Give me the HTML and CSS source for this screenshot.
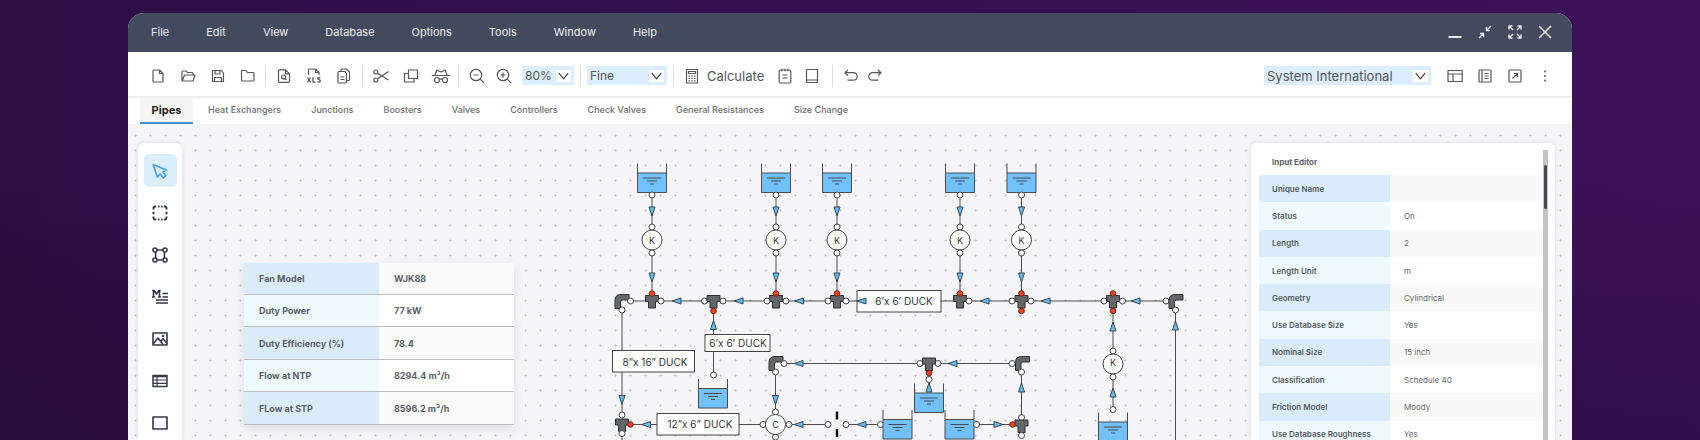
FILE: index.html
```html
<!DOCTYPE html>
<html lang="en">
<head>
<meta charset="utf-8">
<title>Pipe network designer</title>
<link rel="stylesheet" href="styles.css">
</head>
<body>
<div class="window">
  <header class="titlebar">
    <nav class="menu" aria-label="Main menu">
      <button type="button">File</button>
      <button type="button">Edit</button>
      <button type="button">View</button>
      <button type="button">Database</button>
      <button type="button">Options</button>
      <button type="button">Tools</button>
      <button type="button">Window</button>
      <button type="button">Help</button>
    </nav>
    <div class="window-controls">
      <button type="button" aria-label="Minimize"><svg class="icon" viewBox="0 0 16 16"><path d="M1.500 13h13" stroke-width="2"/></svg></button>
      <button type="button" aria-label="Restore"><svg class="icon" viewBox="0 0 16 16"><path d="M14 2 9.500 6.500M9.500 3v3.500H13M2 14l4.500-4.500M3 9.500h3.500V13" stroke-width="1.400"/></svg></button>
      <button type="button" aria-label="Full screen"><svg class="icon" viewBox="0 0 16 16"><path d="M2 5.500V2h3.500M2 2l4 4M10.500 2H14v3.500M14 2l-4 4M2 10.500V14h3.500M2 14l4-4M14 10.500V14h-3.500M14 14l-4-4" stroke-width="1.400"/></svg></button>
      <button type="button" aria-label="Close"><svg class="icon" viewBox="0 0 16 16"><path d="m2 2 12 12M14 2 2 14" stroke-width="1.500"/></svg></button>
    </div>
  </header>

  <div class="toolbar" role="toolbar" aria-label="Tools">
    <div class="group">
      <button type="button" aria-label="New"><svg class="icon" viewBox="0 0 16 16"><path d="M9.500 2H4a1 1 0 0 0-1 1v10a1 1 0 0 0 1 1h8a1 1 0 0 0 1-1V5.500zM9.500 2v3.500H13"/></svg></button>
      <button type="button" aria-label="Open"><svg class="icon" viewBox="0 0 16 16"><path d="M2 13V4a1 1 0 0 1 1-1h3l1.500 1.500H12a1 1 0 0 1 1 1V7M2.300 13 4.500 7H15l-2 6z"/></svg></button>
      <button type="button" aria-label="Save"><svg class="icon" viewBox="0 0 16 16"><path d="M3 2.500h8.500L13.500 5v8.500h-11V3zM5 2.500V6h5V2.500M4.500 13.500V9.500h7v4"/></svg></button>
      <button type="button" aria-label="Folder"><svg class="icon" viewBox="0 0 16 16"><path d="M2 2.500h4L7.500 4.500H13a1 1 0 0 1 1 1V12a1 1 0 0 1-1 1H2.500a1 1 0 0 1-1-1V3z"/></svg></button>
    </div>
    <div class="group">
      <button type="button" aria-label="Preview"><svg class="icon" viewBox="0 0 16 16"><path d="M9.500 1.800H3.500a1 1 0 0 0-1 1v10.500a1 1 0 0 0 1 1h9a1 1 0 0 0 1-1V5.800zM9.500 1.800v4h4"/><circle cx="7.600" cy="9" r="2"/><path d="m9 10.500 1.500 1.500"/></svg></button>
      <button type="button" aria-label="Export to spreadsheet"><svg class="icon" viewBox="0 0 16 16"><path d="M2.500 7V2a1 1 0 0 1 1-1h6L13 4.500V7M9.500 1v3.500H13"/><path d="m1.500 9.500 3 5M4.500 9.500l-3 5M7 9.200v5h2.500M14.200 10c-.6-.8-2.500-.6-2.500.5 0 1.300 2.700.8 2.700 2.300 0 1.500-2.300 1.600-2.900.6" stroke-width="1.300"/></svg></button>
      <button type="button" aria-label="Documents"><svg class="icon" viewBox="0 0 16 16"><path d="M9 3.500H3a1 1 0 0 0-1 1V14a1 1 0 0 0 1 1h6.500a1 1 0 0 0 1-1V5.500zM5 3.500V2a1 1 0 0 1 1-1h4.500L13.500 4v7.500a1 1 0 0 1-1 1h-2M4.500 9h4M4.500 11.500h4"/></svg></button>
    </div>
    <div class="group edit">
      <button type="button" aria-label="Cut"><svg class="icon" viewBox="0 0 16 16"><circle cx="2.800" cy="4" r="2"/><circle cx="2.800" cy="12" r="2"/><path d="M4.500 5.200 15.500 12M4.500 10.800 15.500 3.500"/></svg></button>
      <button type="button" aria-label="Duplicate"><svg class="icon" viewBox="0 0 16 16"><path d="M5.500 2h9v8.500h-9zM5.500 5.500h-4V14H11v-3.500"/></svg></button>
      <button type="button" aria-label="Inspect"><svg class="icon wide" viewBox="0 0 20 16"><circle cx="6" cy="12" r="2.500"/><circle cx="14" cy="12" r="2.500"/><path d="M8.500 11.500c1-.8 2-.8 3 0M.8 7.500h18.400M4 7l1.800-5 4.200 2 4.200-2L16 7"/></svg></button>
    </div>
    <div class="group">
      <button type="button" class="zoom" aria-label="Zoom out"><svg class="icon" viewBox="0 0 16 16"><circle cx="7" cy="7" r="5.700"/><path d="m11.200 11.200 4 4M4.500 7h5"/></svg></button>
      <button type="button" class="zoom" aria-label="Zoom in"><svg class="icon" viewBox="0 0 16 16"><circle cx="7" cy="7" r="5.700"/><path d="m11.200 11.200 4 4M4.500 7h5M7 4.500v5"/></svg></button>
      <span class="select zoom-level"><select aria-label="Zoom level"><option>80%</option></select><svg class="chevron" viewBox="0 0 16 12"><path d="m3 3 5 6 5-6"/></svg></span>
    </div>
    <div class="group">
      <span class="select quality"><select aria-label="Grid quality"><option>Fine</option></select><svg class="chevron" viewBox="0 0 16 12"><path d="m3 3 5 6 5-6"/></svg></span>
    </div>
    <div class="group calc">
      <button type="button" class="calculate"><svg class="icon" viewBox="0 0 16 16"><path d="M2.500 1.500h11v13.500h-11zM4.500 3.500h7v2h-7zM4.500 8.200h1.500M7.200 8.200h1.500M10 8.200h1.500M4.500 10.500h1.500M7.200 10.500h1.500M10 10.500h1.500M4.500 12.800h1.500M7.200 12.800h1.500M10 12.800h1.500"/></svg>Calculate</button>
      <button type="button" aria-label="Notes"><svg class="icon" viewBox="0 0 16 16"><rect x="2.200" y="2" width="11.600" height="13" rx="1.500"/><path d="M5 .8v2.400M8 .8v2.400M11 .8v2.400M5.500 7h5M5.500 10h5"/></svg></button>
      <button type="button" aria-label="Library"><svg class="icon" viewBox="0 0 16 16"><path d="M2.500 12.500V2.500a1 1 0 0 1 1-1h10v13H3.500c-1.300 0-1.300-2.500 0-2.500h10"/></svg></button>
    </div>
    <div class="group history">
      <button type="button" aria-label="Undo"><svg class="icon" viewBox="0 0 16 16"><path d="M5 2 2 4.700 5 7.500M2 4.700h8.500a3.700 3.700 0 0 1 0 7.400H4.500"/></svg></button>
      <button type="button" aria-label="Redo"><svg class="icon" viewBox="0 0 16 16"><path d="m11 2 3 2.700-3 2.800M14 4.700H5.500a3.700 3.700 0 0 0 0 7.400h6"/></svg></button>
    </div>
    <div class="group end">
      <span class="select units"><select aria-label="Unit system"><option>System International</option></select><svg class="chevron" viewBox="0 0 16 12"><path d="m3 3 5 6 5-6"/></svg></span>
      <div class="views">
        <button type="button" aria-label="Layout"><svg class="icon" viewBox="0 0 16 16"><path d="M1 2.500h14.200v11H1zM1 6h14.200M6 6v7.500"/></svg></button>
        <button type="button" aria-label="Report"><svg class="icon" viewBox="0 0 16 16"><rect x="2" y="2" width="12" height="12" rx="1"/><path d="M5 2v12M7.500 5.500h4M7.500 8h4M7.500 10.500h4"/></svg></button>
        <button type="button" aria-label="Pop out"><svg class="icon" viewBox="0 0 16 16"><rect x="2" y="2" width="12" height="12" rx="1"/><path d="m5.500 10.500 5-5M7 5.500h3.500V9"/></svg></button>
        <button type="button" aria-label="More"><svg class="icon dots" viewBox="0 0 16 16"><circle cx="8" cy="3.500" r="1"/><circle cx="8" cy="8" r="1"/><circle cx="8" cy="12.500" r="1"/></svg></button>
      </div>
    </div>
  </div>

  <div class="tabs" role="tablist">
    <button type="button" role="tab" aria-selected="true" class="tab active">Pipes</button>
    <button type="button" role="tab" class="tab">Heat Exchangers</button>
    <button type="button" role="tab" class="tab">Junctions</button>
    <button type="button" role="tab" class="tab">Boosters</button>
    <button type="button" role="tab" class="tab">Valves</button>
    <button type="button" role="tab" class="tab">Controllers</button>
    <button type="button" role="tab" class="tab">Check Valves</button>
    <button type="button" role="tab" class="tab">General Resistances</button>
    <button type="button" role="tab" class="tab">Size Change</button>
  </div>

  <main class="canvas">
    <aside class="palette" aria-label="Drawing tools">
      <button type="button" class="active" aria-label="Select"><svg class="icon" viewBox="0 0 16 16"><path d="m1.200 1.500 4.300 12.800 2.500-3.300 3.300 3.800 2.700-2.300-3.200-3.600 3.700-1.800z"/></svg></button>
      <button type="button" aria-label="Marquee"><svg class="icon" viewBox="0 0 16 16"><path d="M1.500 4.500V3A1.500 1.500 0 0 1 3 1.500h1.200M11.800 1.500H13A1.500 1.500 0 0 1 14.500 3v1.500M14.500 11.500V13a1.500 1.500 0 0 1-1.500 1.500h-1.200M4.200 14.500H3A1.500 1.500 0 0 1 1.500 13v-1.500M6 1.500h1.500M9 1.500h1.500M6 14.500h1.500M9 14.500h1.500M1.500 6.700v2.600M14.500 6.700v2.600" stroke-width="1.900"/></svg></button>
      <button type="button" aria-label="Nodes"><svg class="icon" viewBox="0 0 16 16"><circle cx="3" cy="3" r="2"/><circle cx="13" cy="3" r="2"/><circle cx="3" cy="13" r="2"/><circle cx="13" cy="13" r="2"/><path d="M5 3h6M5 13h6M3.600 5v6M12.400 5v6"/></svg></button>
      <button type="button" aria-label="Text"><svg class="icon" viewBox="0 0 16 16"><path d="M1.500 1.700v6M.2 1.500h2L4.500 5l2.300-3.500h1.800M7.500 1.700v6M0 8h3M6 8h3M10.500 4.500H16M10.500 8H16M4 11h12M4 14h12"/></svg></button>
      <button type="button" aria-label="Image"><svg class="icon" viewBox="0 0 16 16"><path d="M1 2h14v12H1zM1.500 12.500l4.500-5.500 5 6.500M9 10l2-2.200 3.800 4.200"/><circle cx="11" cy="5" r=".5"/></svg></button>
      <button type="button" aria-label="Table"><svg class="icon" viewBox="0 0 16 16"><path d="M1 2.500h14v11H1zM1 3.500h14" stroke-width="1.500"/><path d="M1 7h14M1 10.300h14M5 4v9" stroke-width="1.200"/></svg></button>
      <button type="button" aria-label="Rectangle"><svg class="icon" viewBox="0 0 16 16"><path d="M1 2h14v12H1z"/></svg></button>
    </aside>

    <table class="fan-card">
      <tbody>
        <tr><th scope="row">Fan Model</th><td>WJK88</td></tr>
        <tr><th scope="row">Duty Power</th><td>77 kW</td></tr>
        <tr><th scope="row">Duty Efficiency (%)</th><td>78.4</td></tr>
        <tr><th scope="row">Flow at NTP</th><td>8294.4 m³/h</td></tr>
        <tr><th scope="row">FLow at STP</th><td>8596.2 m³/h</td></tr>
      </tbody>
    </table>

    <svg class="diagram" viewBox="514 143 737 297" preserveAspectRatio="xMidYMin meet" role="img" aria-label="Pipe network">
      <defs>
        <g id="tank">
          <path class="water" d="M-14.500 9.500h29V29h-29z"/>
          <path class="line" d="M-14.500 0v29h29V0M-14.500 9.500h29M-9 14.500H9M-5 17.500H5M-2 20.500H2"/>
        </g>
        <circle id="port" class="port" r="3"/>
        <circle id="stop" class="stop" r="2.800"/>
        <path id="down" class="arrow" d="M-3-4.500h6L0 4.500z"/>
        <path id="up" class="arrow" d="M-3 4.500h6L0-4.500z"/>
        <path id="left" class="arrow" d="M4.500-3v6L-4.500 0z"/>
        <path id="right" class="arrow" d="M-4.500-3v6L4.500 0z"/>
        <path id="tee" class="fitting" d="M-6.500-5.500h13v6H3.500V7h-7V.5h-3z"/>
        <path id="elbow" class="fitting" d="M7.500-7v5.500H1q-2 0-2 2V7h-5.500V-1q0-6 6-6z"/>
        <g id="branch">
          <path class="line" d="M0 192v102"/>
          <use href="#tank" y="163.500"/>
          <use href="#port" y="195"/><use href="#down" y="211.500"/>
          <use href="#port" y="227"/><circle class="node" cy="240" r="10"/><use href="#port" y="253"/>
          <use href="#down" y="277.500"/><use href="#tee" y="301"/><use href="#stop" y="293.500"/>
          <text x="0" y="243.500" text-anchor="middle">K</text>
        </g>
      </defs>

      <path class="line" d="M630 301H1166M622 310v104M622 436v20M713.500 311v64M630 424.500h133M789 424.500h39M846 424.500h35M976 424.500h36M784 363.500h228M775.500 372v40M775.500 437v20M1021.500 372v45M929 373v17M1113 311v98M1175.500 310v150"/>

      <use href="#branch" x="652"/><use href="#branch" x="776"/><use href="#branch" x="837"/><use href="#branch" x="960"/><use href="#branch" x="1021.500"/>

      <use href="#elbow" x="621.500" y="301.500"/><use href="#port" x="630.500" y="301"/><use href="#port" x="622" y="310"/>
      <use href="#port" x="661" y="301"/><use href="#left" x="676.500" y="301"/><use href="#port" x="704.500" y="301"/>
      <use href="#tee" x="713.500" y="301"/><use href="#stop" x="713.500" y="311"/><use href="#port" x="723" y="301"/>
      <use href="#left" x="738.500" y="301"/><use href="#port" x="767" y="301"/><use href="#port" x="786" y="301"/>
      <use href="#left" x="799" y="301"/><use href="#port" x="828" y="301"/><use href="#port" x="846" y="301"/>
      <rect class="label" x="857" y="290.500" width="84" height="21.500"/><use href="#left" x="861.500" y="301"/>
      <use href="#port" x="969" y="301"/><use href="#left" x="984.500" y="301"/><use href="#port" x="1012" y="301"/>
      <use href="#stop" x="1021.500" y="311"/><use href="#port" x="1031" y="301"/><use href="#left" x="1045.500" y="301"/>
      <use href="#port" x="1104" y="301"/><use href="#tee" x="1113" y="301"/><use href="#stop" x="1113" y="293.500"/><use href="#stop" x="1113" y="311"/>
      <use href="#port" x="1122.500" y="301"/><use href="#left" x="1135.500" y="301"/><use href="#port" x="1166" y="301"/>
      <use href="#elbow" x="1175.500" y="301.500"/><use href="#port" x="1175.500" y="310"/><use href="#up" x="1175.500" y="325.500"/>

      <use href="#up" x="713.500" y="325"/><rect class="label" x="705" y="334.500" width="65" height="17"/>
      <use href="#port" x="713.500" y="375"/><use href="#tank" x="713" y="379"/>
      <rect class="label" x="612.500" y="350.500" width="82" height="21.500"/>
      <use href="#down" x="622" y="400"/><use href="#port" x="622" y="415"/><use href="#tee" x="622" y="424.500"/><use href="#stop" x="630.500" y="424.500"/><use href="#port" x="622" y="433.500"/>
      <use href="#left" x="646" y="424.500"/><rect class="label" x="657" y="413.500" width="82" height="21.500"/>

      <use href="#port" x="763" y="424.500"/><use href="#port" x="789" y="424.500"/><use href="#port" x="775.500" y="412"/><use href="#port" x="775.500" y="437"/>
      <circle class="node" cx="775.500" cy="424.500" r="10"/><use href="#down" x="775.500" y="400"/>
      <use href="#elbow" x="775.500" y="363.500"/><use href="#port" x="784" y="363.500"/><use href="#port" x="775.500" y="372"/>
      <use href="#left" x="798.500" y="363.500"/><use href="#left" x="798.500" y="424.500"/>
      <use href="#port" x="828" y="424.500"/><use href="#port" x="846" y="424.500"/><path class="valve" d="M837 411.500v8M837 429v8"/>
      <use href="#left" x="861.500" y="424.500"/><use href="#port" x="880.500" y="424.500"/>
      <use href="#tank" x="897.500" y="410"/><use href="#tank" x="959.500" y="410"/>
      <use href="#port" x="976.500" y="424.500"/><use href="#right" x="998.500" y="424.500"/>
      <use href="#tank" x="929" y="383.500"/><use href="#up" x="929" y="387.500"/><use href="#port" x="920" y="363.500"/><use href="#port" x="938" y="363.500"/>
      <use href="#tee" x="929" y="363.500"/><use href="#stop" x="929" y="373"/><use href="#port" x="929" y="379.500"/>
      <use href="#left" x="952.500" y="363.500"/><use href="#port" x="1012" y="363.500"/><use href="#elbow" x="1022" y="363.500"/>
      <use href="#port" x="1021.500" y="372"/><use href="#up" x="1021.500" y="387.500"/><use href="#port" x="1021.500" y="417.500"/>
      <use href="#tee" x="1021.500" y="425.500"/><use href="#stop" x="1012.500" y="424.500"/><use href="#port" x="1021.500" y="435.500"/>

      <use href="#up" x="1113" y="326.500"/><use href="#port" x="1113" y="351"/><use href="#port" x="1113" y="377"/>
      <circle class="node" cx="1113" cy="364" r="10"/><use href="#up" x="1113" y="392.500"/><use href="#port" x="1113" y="409.500"/><use href="#tank" x="1113" y="412.500"/>

      <g class="captions" text-anchor="middle">
        <text x="904" y="305">6’x 6’ DUCK</text>
        <text x="738" y="347">6’x 6’ DUCK</text>
        <text x="655" y="366">8”x 16” DUCK</text>
        <text x="700" y="428">12”x 6” DUCK</text>
        <text class="mark" x="775.500" y="427.500">C</text>
        <text class="mark" x="1113" y="366">K</text>
      </g>
    </svg>

    <section class="editor">
      <div class="editor-body">
        <h2>Input Editor</h2>
        <table>
          <tbody>
            <tr><th scope="row">Unique Name</th><td></td></tr>
            <tr><th scope="row">Status</th><td>On</td></tr>
            <tr><th scope="row">Length</th><td>2</td></tr>
            <tr><th scope="row">Length Unit</th><td>m</td></tr>
            <tr><th scope="row">Geometry</th><td>Cylindrical</td></tr>
            <tr><th scope="row">Use Database Size</th><td>Yes</td></tr>
            <tr><th scope="row">Nominal Size</th><td>15 inch</td></tr>
            <tr><th scope="row">Classification</th><td>Schedule 40</td></tr>
            <tr><th scope="row">Friction Model</th><td>Moody</td></tr>
            <tr><th scope="row">Use Database Roughness</th><td>Yes</td></tr>
          </tbody>
        </table>
      </div>
      <div class="scrollbar"><div class="thumb"></div></div>
    </section>
  </main>
</div>
</body>
</html>
```
FILE: styles.css
```css
* { box-sizing: border-box; }

body {
  margin: 0;
  height: 100vh;
  overflow: hidden;
  padding: 13px 128px 0;
  background:
    linear-gradient(180deg, rgba(20, 5, 35, 0) 40%, rgba(20, 5, 35, 0.25)),
    linear-gradient(90deg, #2c0f43, #340f50 35%, #3c1158);
  font-family: Inter, "Liberation Sans", sans-serif;
  color: #55595f;
}

button {
  display: flex;
  align-items: center;
  justify-content: center;
  padding: 0;
  border: 0;
  background: none;
  color: inherit;
  font: inherit;
}

.icon {
  display: block;
  width: 16px;
  height: 16px;
  fill: none;
  stroke: currentColor;
  stroke-width: 1.2;
  stroke-linejoin: round;
  overflow: visible;
}

.icon.wide { width: 20px; margin: 0 -2px; }
.icon.dots { fill: currentColor; stroke: none; }

.window {
  display: flex;
  flex-direction: column;
  height: 100%;
  overflow: hidden;
  border-radius: 16px 16px 0 0;
  background: #fff;
}

.titlebar {
  display: flex;
  justify-content: space-between;
  align-items: center;
  height: 39px;
  padding: 0 19px 2px 23px;
  background: #454b5e;
  color: #eceef2;
  font-size: 11px;
}

.menu { display: flex; gap: 37px; }

.window-controls { display: flex; gap: 14px; }

.toolbar {
  display: flex;
  align-items: center;
  height: 46px;
  padding: 3px 19px 0 22px;
  border-bottom: 2px solid #eee;
  color: #55565a;
  font-size: 13px;
}

.group { display: flex; align-items: center; gap: 14px; }

.group + .group:not(.end)::before {
  content: "";
  width: 1px;
  height: 22px;
  background: #ddd;
}

.group + .group { margin-left: 9px; gap: 14px; }
.group + .edit { margin-left: 10px; }
.group + .group > :nth-child(1) { margin-left: -4px; }
.group > .zoom + .zoom { margin-left: -3px; }
.group > .zoom-level { margin-left: -4px; }
.group + .group > .quality:nth-child(1) { margin-left: -8px; }
.group + .group:has(.quality), .group:has(.quality) + .group { margin-left: 6px; }
.calc > button + button { margin-left: -3px; }
.group + .group > .calculate { gap: 7px; margin-right: 2px; }
.group + .history { gap: 8px; margin-left: 12px; }
.group + .history > button:nth-child(1) { margin-left: 2px; }

.group + .group.end { margin-left: auto; gap: 16px; }
.views { display: flex; gap: 14px; }

.select { position: relative; display: block; height: 19px; }

.select select {
  width: 100%;
  height: 100%;
  padding: 0 20px 0 3px;
  border: 0;
  border-radius: 0;
  background: #dceefd;
  color: inherit;
  font: inherit;
  appearance: none;
}

.zoom-level { width: 52px; font-size: 12px; }
.quality { width: 80px; font-size: 12px; }
.units { width: 167px; }

.chevron {
  position: absolute;
  top: 4px;
  right: 3px;
  width: 15px;
  height: 12px;
  background: #fff;
  fill: none;
  stroke: #44464a;
  stroke-width: 1.4;
  pointer-events: none;
}

.tabs {
  display: flex;
  gap: 30px;
  height: 26px;
  padding-left: 12px;
  color: #6d6d70;
  font-size: 9px;
  font-weight: 500;
}

.tab { padding-bottom: 4px; white-space: nowrap; }

.tab.active {
  width: 53px;
  margin-right: -15px;
  padding-bottom: 0;
  border-bottom: 2px solid #4090da;
  background: #f5f5f6;
  color: #1d1d20;
  font-size: 11px;
  font-weight: 700;
}

.canvas {
  display: flex;
  flex: 1;
  min-height: 0;
  padding: 19px 17px 0 10px;
  background: #f5f5f7 radial-gradient(circle, #c4c5cb 0.9px, transparent 1.2px) 0 4px / 15px 15px;
}

.palette {
  display: flex;
  flex: none;
  flex-direction: column;
  align-items: center;
  gap: 9px;
  width: 44px;
  padding-top: 11px;
  border-radius: 6px 6px 0 0;
  background: #fff;
  box-shadow: 0 0 5px #0000001a;
  color: #343848;
}

.palette button {
  flex: none;
  width: 33px;
  height: 33px;
  border-radius: 5px;
}

.palette .icon { stroke-width: 1.6; }
.palette .active { background: #dbeefc; color: #4a9fe4; }

table { border-collapse: collapse; table-layout: fixed; }
th, td { text-align: left; white-space: nowrap; }

.fan-card {
  flex: none;
  align-self: flex-start;
  width: 270px;
  height: 162px;
  margin: 120px 0 0 62px;
  box-shadow: 0 4px 10px #00000018;
  color: #5b5f67;
  font-size: 9px;
  font-weight: 700;
}

.fan-card th, .fan-card td {
  width: 50%;
  padding: 0 15px;
  border-bottom: 1px solid #bcbec1;
}

.fan-card td { background: #fff; }
.fan-card th { background: #effaff; }
.fan-card tr:nth-child(odd) td { background: #fafafb; }
.fan-card tr:nth-child(odd) th { background: #daecfa; }

.diagram {
  flex: 1;
  min-width: 0;
  height: 297px;
  font-size: 9px;
  fill: #333;
}

.line { fill: none; stroke: #4b4b4e; stroke-width: 1; }
.water { fill: #70c1fd; }
.port, .node, .label { fill: #fff; stroke: #444; stroke-width: 1; }
.stop { fill: #ee4023; stroke: #6b2a20; stroke-width: 1; }
.arrow { fill: #63bdf2; stroke: #3b4650; stroke-width: 1; }
.fitting { fill: #66676a; stroke: #303032; stroke-width: 1; }
.valve { stroke: #111; stroke-width: 2.5; }
.captions { font-size: 10px; }
.captions .mark { font-size: 9px; }

.editor {
  display: flex;
  flex: none;
  width: 304px;
  padding: 7px 7px 0 8px;
  border-radius: 5px 5px 0 0;
  background: #fff;
  box-shadow: 0 0 5px #0000001a;
  overflow: hidden;
}

.editor-body { flex: 1; font-size: 8px; }

.editor h2 {
  height: 25px;
  margin: 0;
  padding-left: 13px;
  color: #60646b;
  font-size: 8px;
  font-weight: 700;
  line-height: 25px;
}

.editor table { width: 100%; height: 273px; }
.editor th { width: 131px; padding: 0 13px; background: #effaff; color: #555a62; font-weight: 600; }
.editor td { padding: 0 14px; color: #66696e; }
.editor tr:nth-child(odd) th { background: #daecfa; }
.editor tr:nth-child(odd) td { background: #f9f9fa; }

.scrollbar { width: 5px; padding: 15px 1px 0; background: #c3c3c4; }
.thumb { height: 44px; border-radius: 2px; background: #434a5b; }
```
